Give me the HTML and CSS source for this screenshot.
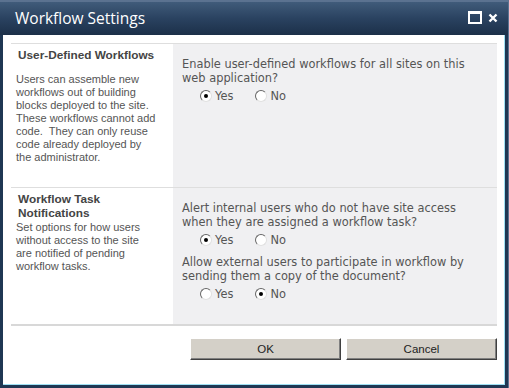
FILE: index.html
```html
<!DOCTYPE html>
<html lang="en">
<head>
    <meta charset="UTF-8">
    <title>Workflow Settings</title>
    <link rel="stylesheet" href="styles.css">
</head>
<body>
    <div class="dialog">
        <div class="title-bar">
            <span class="title-text">Workflow Settings</span>
            <div class="title-buttons">
                <span class="btn-max"></span>
                <svg class="btn-close" width="10" height="10" viewBox="0 0 10 10">
                    <path d="M1.5 1.5 L8.5 8.5 M8.5 1.5 L1.5 8.5" stroke="#fff" stroke-width="2.4"/>
                </svg>
            </div>
        </div>

        <div class="dialog-body">
            <div class="settings">
                <div class="section">
                    <div class="section-info">
                        <h3 class="section-title">User-Defined Workflows</h3>
                        <p class="section-desc first-desc">Users can assemble new<br>workflows out of building<br>blocks deployed to the site.<br>These workflows cannot add<br>code.&nbsp; They can only reuse<br>code already deployed by<br>the administrator.</p>
                    </div>
                    <div class="section-fields section-fields-first">
                        <p class="field-label">Enable user-defined workflows for all sites on this web application?</p>
                        <div class="radio-row">
                            <label class="radio"><span class="radio-dot checked"></span>Yes</label>
                            <label class="radio"><span class="radio-dot"></span>No</label>
                        </div>
                    </div>
                </div>

                <div class="section section-last">
                    <div class="section-info">
                        <h3 class="section-title">Workflow Task<br>Notifications</h3>
                        <p class="section-desc">Set options for how users<br>without access to the site<br>are notified of pending<br>workflow tasks.</p>
                    </div>
                    <div class="section-fields">
                        <p class="field-label">Alert internal users who do not have site access when they are assigned a workflow task?</p>
                        <div class="radio-row">
                            <label class="radio"><span class="radio-dot checked"></span>Yes</label>
                            <label class="radio"><span class="radio-dot"></span>No</label>
                        </div>
                        <p class="field-label">Allow external users to participate in workflow by sending them a copy of the document?</p>
                        <div class="radio-row">
                            <label class="radio"><span class="radio-dot"></span>Yes</label>
                            <label class="radio"><span class="radio-dot checked"></span>No</label>
                        </div>
                    </div>
                </div>
            </div>

            <div class="button-row">
                <button class="dlg-button">OK</button>
                <button class="dlg-button">Cancel</button>
            </div>
        </div>
    </div>
</body>
</html>
```

FILE: styles.css
```css
body {
    margin: 0;
    padding: 2px 1px 0 0;
    background: #5b7290;
    font-family: 'Liberation Sans', Arial, sans-serif;
}

.dialog {
    width: 508px;
    height: 386px;
    box-sizing: border-box;
    display: flex;
    flex-direction: column;
    border: 3px solid #1f3753;
    border-top: none;
    background: #1f3753;
}

.title-bar {
    height: 33px;
    display: flex;
    align-items: center;
    justify-content: space-between;
    padding: 0 10px 0 15px;
    margin: 0 -3px;
    background: linear-gradient(to bottom, #405b7a 0%, #2a4260 50%, #1c3049 100%);
}

.title-text {
    font-family: 'Open Sans', 'Liberation Sans', sans-serif;
    font-size: 15.5px;
    color: #fff;
    margin-top: -1px;
}

.title-buttons {
    display: flex;
    align-items: center;
    gap: 6px;
    margin-top: -2px;
}

.btn-max {
    width: 10px;
    height: 8px;
    border: 2px solid #fff;
    border-top-width: 3px;
}

.dialog-body {
    flex: 1;
    background: #fff;
    border-right: 1px solid #9fe0f3;
    border-bottom: 1px solid #9fe0f3;
    padding: 8px 7px 0 8px;
    display: flex;
    flex-direction: column;
}

.settings {
    border-top: 1px solid #dedede;
}

.section {
    display: flex;
    border-bottom: 1px solid #dedede;
}

.section-last {
    border-bottom: 2px solid #d8d8d8;
}

.section-info {
    width: 162px;
    box-sizing: border-box;
    padding: 4px 4px 0 5px;
}

.section-title {
    margin: 0;
    padding-left: 2px;
    font-size: 11.8px;
    font-weight: 700;
    color: #444;
    line-height: 14px;
    white-space: nowrap;
}

.section-desc {
    margin: 1px 0 0;
    font-size: 11px;
    line-height: 13px;
    color: #555;
    white-space: nowrap;
}

.first-desc {
    margin-top: 11px;
}

.section-fields {
    flex: 1;
    background: #f0f0f2;
    padding: 13px 8px 15px 9px;
    font-family: 'DejaVu Sans', Verdana, sans-serif;
    font-size: 11.4px;
    color: #555;
}

.section-fields-first {
    height: 143px;
    box-sizing: border-box;
}

.field-label {
    margin: 0;
    line-height: 14px;
}

.radio-row {
    display: flex;
    gap: 22px;
    padding: 4px 0 8px 18px;
}

.radio {
    display: flex;
    align-items: center;
    gap: 3px;
    line-height: 14px;
}

.radio-dot {
    width: 10px;
    height: 10px;
    border-radius: 50%;
    border: 1px solid #666;
    border-right-color: #e0e0e0;
    border-bottom-color: #e0e0e0;
    background: #fff;
    position: relative;
}

.radio-dot.checked::after {
    content: "";
    position: absolute;
    left: 3px;
    top: 3px;
    width: 4px;
    height: 4px;
    border-radius: 50%;
    background: #000;
}

.button-row {
    display: flex;
    justify-content: flex-end;
    gap: 5px;
    margin-top: 12px;
}

.dlg-button {
    width: 151px;
    height: 22px;
    background: #d4d0c8;
    border: 1px solid;
    border-color: #fff #404040 #404040 #fff;
    box-shadow: inset -1px -1px 0 #808080;
    font-family: 'Liberation Sans', Arial, sans-serif;
    font-size: 11.5px;
    color: #222;
    padding: 0;
}
```
